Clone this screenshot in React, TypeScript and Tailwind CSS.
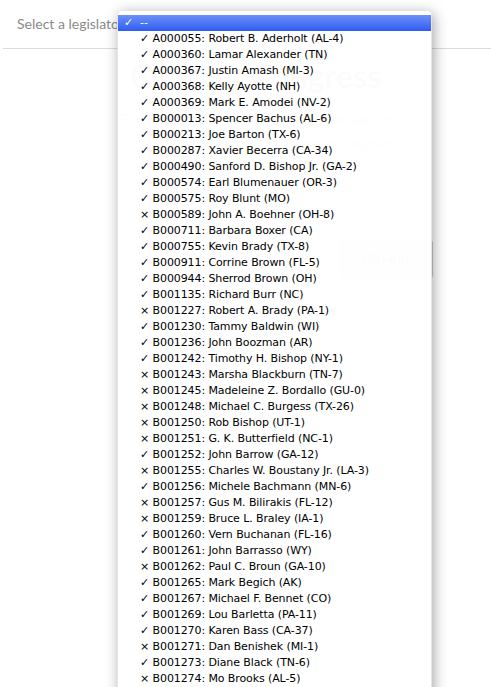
const legislators: [string, string, string][] = [
  ['✓', 'A000055', 'Robert B. Aderholt (AL-4)'],
  ['✓', 'A000360', 'Lamar Alexander (TN)'],
  ['✓', 'A000367', 'Justin Amash (MI-3)'],
  ['✓', 'A000368', 'Kelly Ayotte (NH)'],
  ['✓', 'A000369', 'Mark E. Amodei (NV-2)'],
  ['✓', 'B000013', 'Spencer Bachus (AL-6)'],
  ['✓', 'B000213', 'Joe Barton (TX-6)'],
  ['✓', 'B000287', 'Xavier Becerra (CA-34)'],
  ['✓', 'B000490', 'Sanford D. Bishop Jr. (GA-2)'],
  ['✓', 'B000574', 'Earl Blumenauer (OR-3)'],
  ['✓', 'B000575', 'Roy Blunt (MO)'],
  ['×', 'B000589', 'John A. Boehner (OH-8)'],
  ['✓', 'B000711', 'Barbara Boxer (CA)'],
  ['✓', 'B000755', 'Kevin Brady (TX-8)'],
  ['✓', 'B000911', 'Corrine Brown (FL-5)'],
  ['✓', 'B000944', 'Sherrod Brown (OH)'],
  ['✓', 'B001135', 'Richard Burr (NC)'],
  ['×', 'B001227', 'Robert A. Brady (PA-1)'],
  ['✓', 'B001230', 'Tammy Baldwin (WI)'],
  ['✓', 'B001236', 'John Boozman (AR)'],
  ['✓', 'B001242', 'Timothy H. Bishop (NY-1)'],
  ['×', 'B001243', 'Marsha Blackburn (TN-7)'],
  ['×', 'B001245', 'Madeleine Z. Bordallo (GU-0)'],
  ['×', 'B001248', 'Michael C. Burgess (TX-26)'],
  ['×', 'B001250', 'Rob Bishop (UT-1)'],
  ['×', 'B001251', 'G. K. Butterfield (NC-1)'],
  ['✓', 'B001252', 'John Barrow (GA-12)'],
  ['×', 'B001255', 'Charles W. Boustany Jr. (LA-3)'],
  ['✓', 'B001256', 'Michele Bachmann (MN-6)'],
  ['×', 'B001257', 'Gus M. Bilirakis (FL-12)'],
  ['×', 'B001259', 'Bruce L. Braley (IA-1)'],
  ['✓', 'B001260', 'Vern Buchanan (FL-16)'],
  ['✓', 'B001261', 'John Barrasso (WY)'],
  ['×', 'B001262', 'Paul C. Broun (GA-10)'],
  ['✓', 'B001265', 'Mark Begich (AK)'],
  ['✓', 'B001267', 'Michael F. Bennet (CO)'],
  ['✓', 'B001269', 'Lou Barletta (PA-11)'],
  ['✓', 'B001270', 'Karen Bass (CA-37)'],
  ['×', 'B001271', 'Dan Benishek (MI-1)'],
  ['✓', 'B001273', 'Diane Black (TN-6)'],
  ['×', 'B001274', 'Mo Brooks (AL-5)'],
]

export default function App() {
  return (
    <div className="relative w-[491px] h-[687px] overflow-hidden bg-white font-['Lato','Open_Sans',sans-serif]">
      {/* Page header with the select label */}
      <div className="ml-[3px] h-[49px] border-b border-[#dcdcdc] pl-[14px] pt-[11px]">
        <span className="text-[14px] leading-[20px] text-[#8a8a8a]">Select a legislator</span>
      </div>

      {/* Page body (mostly hidden behind the open menu) */}
      <div className="flex flex-col items-center pt-[8px]">
        <h1 className="pl-[20px] text-[32px] leading-[38px] font-bold text-[#888]">Contact Congress</h1>
        <p className="mt-[12px] w-[300px] pl-[10px] text-right text-[14px] leading-[24px] text-[#aaa]">
          Find out which members accept messages to
          <br />
          their contact forms in Congress
        </p>
        <div className="mt-[84px] ml-[280px] flex h-[40px] w-[94px] items-center justify-center rounded-[4px] border border-[#ccc] bg-[#d8d8d8] text-[15px] text-[#888]">
          GitHub
        </div>
      </div>

      {/* Open native select menu */}
      <div className="absolute left-[117px] top-[10px] w-[315px] h-[700px] rounded-t-[5px] border border-black/10 bg-white/[0.97] pt-[4px] shadow-[2px_3px_14px_rgba(0,0,0,0.35)] font-['DejaVu_Sans','Verdana',sans-serif] text-[11px] leading-[16px] text-black">
        <div className="flex h-[16px] items-center bg-gradient-to-b from-[#6d90f7] to-[#2f5cf0] text-white">
          <span className="w-[22px] pl-[6px] font-bold">✓</span>
          <span>--</span>
        </div>
        {legislators.map(([mark, id, name]) => (
          <div key={id} className="flex h-[16px] items-center pl-[22px] whitespace-nowrap tracking-[-0.1px]">
            {mark} {id}: {name}
          </div>
        ))}
      </div>
    </div>
  )
}
